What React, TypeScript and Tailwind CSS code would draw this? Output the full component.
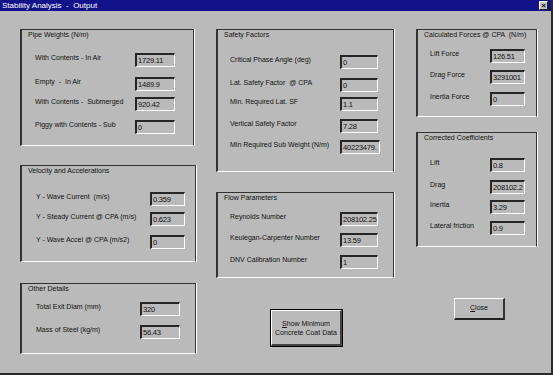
import React from "react";

const FONT = "font-['Liberation_Sans',Arial,sans-serif]";

type RowProps = {
  label: string;
  value: string;
  mt: string;
  labelW: string;
  inputW: string;
};

function Row({ label, value, mt, labelW, inputW }: RowProps) {
  return (
    <div className={`flex items-start ${mt}`}>
      <div className={`${labelW} shrink-0 pt-[1px] leading-[8px] whitespace-pre`}>{label}</div>
      <div
        className={`${inputW} h-[14px] shrink-0 box-border border-t-2 border-l-2 border-t-[#262626] border-l-[#262626] border-b border-r border-b-white border-r-white pl-[1px] text-[7.5px] tracking-[-0.2px] leading-[12px] overflow-hidden whitespace-nowrap`}
      >
        {value}
      </div>
    </div>
  );
}

type BoxProps = {
  title: string;
  w: string;
  h: string;
  mt?: string;
  headH: string;
  pl: string;
  children: React.ReactNode;
};

function GroupBox({ title, w, h, mt = "", headH, pl, children }: BoxProps) {
  return (
    <div
      className={`${w} ${h} ${mt} box-border border-t border-l-2 border-r border-b border-t-[#333] border-l-[#333] border-r-[#333] border-b-white shadow-[1px_0_0_#fff] flex flex-col`}
    >
      <div className={`${headH} shrink-0 pl-[6px] pt-[1px] leading-[8px] whitespace-pre`}>{title}</div>
      <div className={`flex flex-col ${pl}`}>{children}</div>
    </div>
  );
}

export default function App() {
  return (
    <div
      className={`${FONT} w-[553px] h-[375px] box-border bg-[#bababa] border-r-2 border-b-2 border-r-[#2a2a2a] border-b-[#2a2a2a] text-[7px] text-[#111] overflow-hidden flex flex-col`}
    >
      {/* Title bar */}
      <div className="h-[11px] shrink-0 bg-[#12128a] flex items-center justify-between pl-[2px] pr-[3px]">
        <span className="text-white text-[8px] leading-[11px] whitespace-pre">Stability Analysis  -  Output</span>
        <div className="w-[9px] h-[9px] bg-[#c6c6c6] border-b border-r border-b-[#222] border-r-[#222] border-t border-l border-t-white border-l-white box-border flex items-center justify-center text-[8px] leading-[7px] font-bold text-black">
          ×
        </div>
      </div>

      {/* Body */}
      <div className="flex pl-[20px] pt-[18px]">
        {/* Column 1 */}
        <div className="w-[176px] flex flex-col items-start">
          <GroupBox title="Pipe Weights (N/m)" w="w-[174px]" h="h-[117px]" headH="h-[23px]" pl="pl-[13px]">
            <Row label="With Contents - In Air" value="1729.11" mt="mt-0" labelW="w-[100px]" inputW="w-[40px]" />
            <Row label="Empty  -  In Air" value="1489.9" mt="mt-[10px]" labelW="w-[100px]" inputW="w-[40px]" />
            <Row label="With Contents -  Submerged" value="920.42" mt="mt-[6px]" labelW="w-[100px]" inputW="w-[40px]" />
            <Row label="Piggy with Contents - Sub" value="0" mt="mt-[9px]" labelW="w-[100px]" inputW="w-[40px]" />
          </GroupBox>

          <GroupBox title="Velocity and Accelerations" w="w-[176px]" h="h-[97px]" mt="mt-[19px]" headH="h-[26px]" pl="pl-[14px]">
            <Row label="Y - Wave Current  (m/s)" value="0.359" mt="mt-0" labelW="w-[114px]" inputW="w-[35px]" />
            <Row label="Y - Steady Current @ CPA (m/s)" value="0.623" mt="mt-[6px]" labelW="w-[114px]" inputW="w-[35px]" />
            <Row label="Y - Wave Accel @ CPA (m/s2)" value="0" mt="mt-[9px]" labelW="w-[114px]" inputW="w-[35px]" />
          </GroupBox>

          <GroupBox title="Other Details" w="w-[176px]" h="h-[71px]" mt="mt-[21px]" headH="h-[18px]" pl="pl-[14px]">
            <Row label="Total Exit Diam (mm)" value="320" mt="mt-0" labelW="w-[104px]" inputW="w-[40px]" />
            <Row label="Mass of Steel (kg/m)" value="56.43" mt="mt-[9px]" labelW="w-[104px]" inputW="w-[40px]" />
          </GroupBox>
        </div>

        {/* Column 2 */}
        <div className="w-[178px] ml-[20px] flex flex-col items-start">
          <GroupBox title="Safety Factors" w="w-[178px]" h="h-[143px]" headH="h-[25px]" pl="pl-[12px]">
            <Row label="Critical Phase Angle (deg)" value="0" mt="mt-0" labelW="w-[110px]" inputW="w-[38px]" />
            <Row label="Lat. Safety Factor  @ CPA" value="0" mt="mt-[9px]" labelW="w-[110px]" inputW="w-[38px]" />
            <Row label="Min. Required Lat. SF" value="1.1" mt="mt-[5px]" labelW="w-[110px]" inputW="w-[38px]" />
            <Row label="Vertical Safety Factor" value="7.28" mt="mt-[8px]" labelW="w-[110px]" inputW="w-[38px]" />
            <Row label="Min Required Sub Weight (N/m)" value="40223479." mt="mt-[7px]" labelW="w-[110px]" inputW="w-[40px]" />
          </GroupBox>

          <GroupBox title="Flow Parameters" w="w-[178px]" h="h-[86px]" mt="mt-[20px]" headH="h-[19px]" pl="pl-[12px]">
            <Row label="Reynolds Number" value="208102.25" mt="mt-0" labelW="w-[110px]" inputW="w-[38px]" />
            <Row label="Keulegan-Carpenter Number" value="13.59" mt="mt-[7px]" labelW="w-[110px]" inputW="w-[38px]" />
            <Row label="DNV Calibration Number" value="1" mt="mt-[8px]" labelW="w-[110px]" inputW="w-[38px]" />
          </GroupBox>

          <div className="mt-[31px] ml-[54px] w-[73px] h-[38px] box-border border border-black">
            <div className="w-full h-full box-border border-t border-l border-t-white border-l-white border-b-2 border-r-2 border-b-[#444] border-r-[#444] flex flex-col items-center justify-center leading-[9px] text-center">
              <span>
                <span className="underline">S</span>how Minimum
              </span>
              <span>Concrete Coat Data</span>
            </div>
          </div>
        </div>

        {/* Column 3 */}
        <div className="w-[121px] ml-[22px] flex flex-col items-start">
          <GroupBox title="Calculated Forces @ CPA  (N/m)" w="w-[121px]" h="h-[88px]" headH="h-[19px]" pl="pl-[12px]">
            <Row label="Lift Force" value="126.51" mt="mt-0" labelW="w-[60px]" inputW="w-[35px]" />
            <Row label="Drag Force" value="3291001" mt="mt-[7px]" labelW="w-[60px]" inputW="w-[35px]" />
            <Row label="Inertia Force" value="0" mt="mt-[8px]" labelW="w-[60px]" inputW="w-[35px]" />
          </GroupBox>

          <GroupBox title="Corrected Coefficients" w="w-[121px]" h="h-[115px]" mt="mt-[15px]" headH="h-[25px]" pl="pl-[12px]">
            <Row label="Lift" value="0.8" mt="mt-0" labelW="w-[60px]" inputW="w-[35px]" />
            <Row label="Drag" value="208102.2" mt="mt-[8px]" labelW="w-[60px]" inputW="w-[35px]" />
            <Row label="Inertia" value="3.29" mt="mt-[6px]" labelW="w-[60px]" inputW="w-[35px]" />
            <Row label="Lateral friction" value="0.9" mt="mt-[7px]" labelW="w-[60px]" inputW="w-[35px]" />
          </GroupBox>

          <div className="mt-[51px] ml-[38px] w-[51px] h-[22px] box-border border-t border-l border-t-white border-l-white border-b-2 border-r-2 border-b-[#222] border-r-[#333] flex items-center justify-center">
            <span>
              <span className="underline">C</span>lose
            </span>
          </div>
        </div>
      </div>
    </div>
  );
}
